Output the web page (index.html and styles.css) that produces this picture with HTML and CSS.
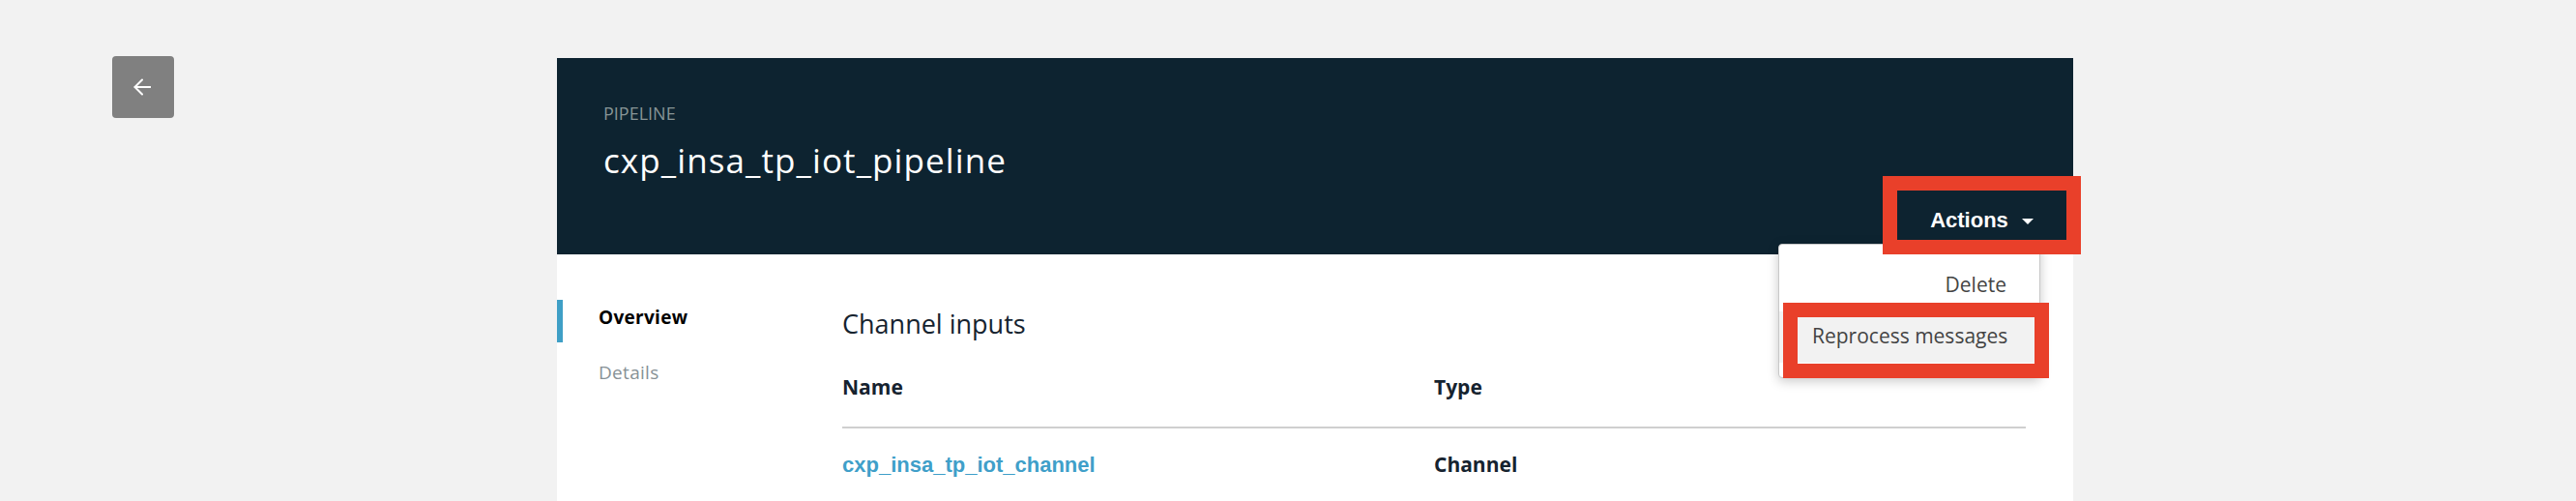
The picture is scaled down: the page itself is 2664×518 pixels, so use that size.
FILE: index.html
```html
<!DOCTYPE html>
<html lang="en">
<head>
<meta charset="utf-8">
<title>cxp_insa_tp_iot_pipeline</title>
<link rel="stylesheet" href="styles.css">
</head>
<body>
<div class="page">
  <button class="back" aria-label="Back">
    <svg width="18" height="18" viewBox="0 0 18 18" fill="none" stroke="#fff" stroke-width="2" stroke-linecap="round" stroke-linejoin="round">
      <path d="M17.5 9H1.5"/>
      <path d="M9 1.5L1.5 9L9 16.5"/>
    </svg>
  </button>
  <main class="panel">
    <header class="hero">
      <div class="hero-text">
        <div class="eyebrow">PIPELINE</div>
        <h1 class="title">cxp_insa_tp_iot_pipeline</h1>
      </div>
      <div class="actions-wrap">
        <button class="actions">Actions <span class="caret"></span></button>
        <ul class="menu">
          <li class="menu-item">Delete</li>
          <li class="menu-item menu-item-hover">Reprocess messages</li>
        </ul>
      </div>
    </header>
    <div class="body">
      <nav class="side">
        <div class="side-item side-item-active">Overview</div>
        <div class="side-item">Details</div>
      </nav>
      <section class="content">
        <h2 class="section-title">Channel inputs</h2>
        <div class="table">
          <div class="row row-head">
            <div class="cell">Name</div>
            <div class="cell">Type</div>
          </div>
          <div class="row">
            <div class="cell"><a class="link" href="#">cxp_insa_tp_iot_channel</a></div>
            <div class="cell cell-strong">Channel</div>
          </div>
        </div>
      </section>
    </div>
  </main>
</div>
</body>
</html>
```
FILE: styles.css
```css
* { box-sizing: border-box; }

html, body {
  margin: 0;
  padding: 0;
  height: 518px;
  overflow: hidden;
  background: #f2f2f2;
  font-family: "Open Sans", "Noto Sans", sans-serif;
}

.page {
  display: flex;
  align-items: flex-start;
  gap: 396px;
  padding: 58px 0 0 116px;
}

.back {
  flex: none;
  width: 64px;
  height: 64px;
  border: none;
  border-radius: 4px;
  background: #808080;
  display: flex;
  align-items: center;
  justify-content: center;
  padding: 0;
}

.back svg { margin-left: -2px; }

.panel {
  flex: none;
  width: 1568px;
  height: 458px;
  margin-top: 2px;
  background: #fff;
}

.hero {
  height: 203px;
  background: #0d2330;
  display: flex;
  justify-content: space-between;
  padding: 48px 7px 15px 48px;
}

.eyebrow {
  font-size: 18px;
  line-height: 18px;
  color: #879596;
}

.title {
  margin: 22px 0 0;
  font-size: 35px;
  line-height: 35px;
  font-weight: 400;
  letter-spacing: 1.1px;
  color: #fff;
}

.actions-wrap {
  position: relative;
  align-self: flex-end;
}

.actions {
  position: relative;
  z-index: 3;
  width: 175px;
  height: 51px;
  padding: 10px 0 0;
  border: none;
  background: #0d2330;
  outline: 15px solid #e9402a;
  color: #fff;
  font-family: "Liberation Sans", Arial, sans-serif;
  font-weight: 700;
  font-size: 22px;
  display: flex;
  align-items: center;
  justify-content: center;
  gap: 14px;
}

.caret {
  width: 0;
  height: 0;
  border-left: 6px solid transparent;
  border-right: 6px solid transparent;
  border-top: 6px solid #fff;
  margin-top: 2px;
}

.menu {
  position: absolute;
  z-index: 2;
  top: calc(100% + 4px);
  right: 27px;
  width: 271px;
  margin: 0;
  padding: 16px 0 15px;
  list-style: none;
  background: #fff;
  border: 1px solid #c8c8c8;
  border-radius: 4px;
  box-shadow: 0 3px 12px rgba(0, 0, 0, 0.22);
}

.menu-item {
  position: relative;
  padding: 11px 34px 14px;
  font-size: 21px;
  line-height: 28px;
  color: #444;
  text-align: right;
  white-space: nowrap;
}

.menu-item-hover {
  background: #f2f2f2;
}

.menu-item-hover::after {
  content: "";
  position: absolute;
  top: -9px;
  left: 4px;
  right: -10px;
  bottom: -16px;
  border: 15px solid #e9402a;
}

.body {
  display: flex;
  padding-top: 47px;
}

.side {
  flex: none;
  width: 295px;
  display: flex;
  flex-direction: column;
  gap: 13px;
}

.side-item {
  padding-left: 43px;
  font-size: 19px;
  line-height: 37px;
  padding-bottom: 7px;
  letter-spacing: 0.3px;
  color: #879196;
}

.side-item-active {
  border-left: 6px solid #3f9fc6;
  padding-left: 37px;
  font-weight: 700;
  color: #000;
}

.content {
  flex: 1;
  padding-right: 49px;
}

.section-title {
  margin: 7px 0 0;
  font-size: 27px;
  line-height: 36px;
  font-weight: 400;
  color: #16232f;
}

.row {
  display: grid;
  grid-template-columns: 612px 1fr;
  align-items: baseline;
  padding-top: 23px;
}

.row-head {
  padding-top: 33px;
  padding-bottom: 27px;
  border-bottom: 2px solid #cfcfcf;
}

.cell {
  font-size: 21px;
  line-height: 28px;
  font-weight: 700;
  color: #16232f;
}

.link {
  font-family: "Liberation Sans", Arial, sans-serif;
  font-size: 22px;
  font-weight: 700;
  color: #3f9fc9;
  text-decoration: none;
}
```
